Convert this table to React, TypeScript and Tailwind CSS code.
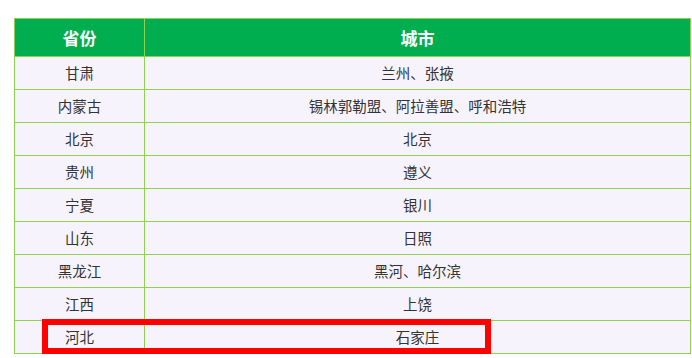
const rows: [string, string][] = [
  ["甘肃", "兰州、张掖"],
  ["内蒙古", "锡林郭勒盟、阿拉善盟、呼和浩特"],
  ["北京", "北京"],
  ["贵州", "遵义"],
  ["宁夏", "银川"],
  ["山东", "日照"],
  ["黑龙江", "黑河、哈尔滨"],
  ["江西", "上饶"],
  ["河北", "石家庄"],
];

export default function App() {
  return (
    <div
      className="w-[692px] h-[358px] bg-white overflow-hidden"
      style={{ fontFamily: '"Noto Sans CJK SC", "Noto Sans", sans-serif' }}
    >
      <div className="relative ml-[14px] mt-[18px] w-[677px] border border-[#92D050]">
        <div className="flex h-[38px] bg-[#00AE4F] border-b border-[#92D050] text-white font-bold text-[17px]">
          <div className="w-[130px] flex items-center justify-center border-r border-[#92D050]">省份</div>
          <div className="flex-1 flex items-center justify-center">城市</div>
        </div>
        {rows.map(([p, c], i) => (
          <div
            key={p}
            className={
              i === rows.length - 1
                ? "flex h-[32px] bg-[#F7F3FD] text-[#333] text-[14.5px]"
                : "flex h-[33px] bg-[#F7F3FD] text-[#333] text-[14.5px] border-b border-[#92D050]"
            }
          >
            <div className="w-[130px] flex items-center justify-center border-r border-[#92D050]">{p}</div>
            <div className="flex-1 flex items-center justify-center">{c}</div>
          </div>
        ))}
        <div className="absolute left-[27px] top-[300px] w-[449px] h-[35px] border-[6px] border-[#FF0000]" />
      </div>
    </div>
  );
}
